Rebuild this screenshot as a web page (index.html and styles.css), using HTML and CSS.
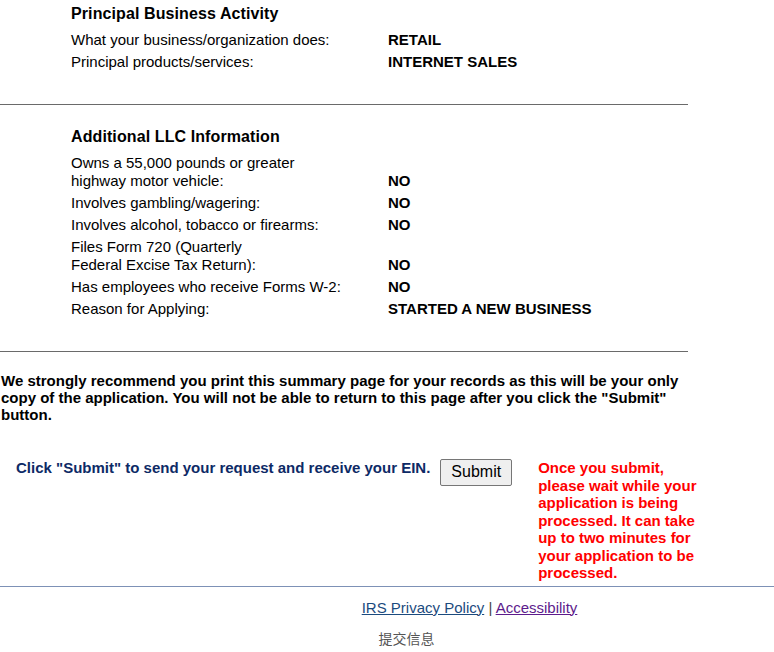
FILE: index.html
```html
<!DOCTYPE html>
<html lang="en">
<head>
    <meta charset="UTF-8">
    <meta name="viewport" content="width=device-width, initial-scale=1.0">
    <title>EIN Application Summary</title>
    <link rel="stylesheet" href="styles.css">
</head>
<body>
    <div class="summary">
        <div class="section">
            <h3>Principal Business Activity</h3>
            <table class="info">
                <tr>
                    <td class="label">What your business/organization does:</td>
                    <td class="value">RETAIL</td>
                </tr>
                <tr>
                    <td class="label">Principal products/services:</td>
                    <td class="value">INTERNET SALES</td>
                </tr>
            </table>
        </div>
        <hr>
        <div class="section">
            <h3>Additional LLC Information</h3>
            <table class="info">
                <tr>
                    <td class="label">Owns a 55,000 pounds or greater<br>highway motor vehicle:</td>
                    <td class="value">NO</td>
                </tr>
                <tr>
                    <td class="label">Involves gambling/wagering:</td>
                    <td class="value">NO</td>
                </tr>
                <tr>
                    <td class="label">Involves alcohol, tobacco or firearms:</td>
                    <td class="value">NO</td>
                </tr>
                <tr>
                    <td class="label">Files Form 720 (Quarterly<br>Federal Excise Tax Return):</td>
                    <td class="value">NO</td>
                </tr>
                <tr>
                    <td class="label">Has employees who receive Forms W-2:</td>
                    <td class="value">NO</td>
                </tr>
                <tr>
                    <td class="label">Reason for Applying:</td>
                    <td class="value">STARTED A NEW BUSINESS</td>
                </tr>
            </table>
        </div>
        <hr>
        <p class="notice">We strongly recommend you print this summary page for your records as this will be your only copy of the application. You will not be able to return to this page after you click the "Submit" button.</p>

        <div class="submit-row">
            <div class="submit-text">Click "Submit" to send your request and receive your EIN.</div>
            <button type="button" class="submit-btn">Submit</button>
            <div class="wait-note">Once you submit, please wait while your application is being processed. It can take up to two minutes for your application to be processed.</div>
        </div>
    </div>

    <div class="footer">
        <div class="footer-links">
            <a href="#" class="privacy">IRS Privacy Policy</a> | <a href="#" class="access">Accessibility</a>
        </div>
        <div class="footer-note">提交信息</div>
    </div>
</body>
</html>
```

FILE: styles.css
```css
html, body {
    margin: 0;
    padding: 0;
}
body {
    font-family: "Liberation Sans", Arial, "Noto Sans CJK SC", sans-serif;
    font-size: 15px;
    color: #000;
    background: #fff;
}
.summary {
    width: 688px;
}
.section {
    padding: 5px 0 0 71px;
}
h3 {
    margin: 0 0 6px 0;
    font-size: 16px;
    line-height: 18px;
    font-weight: bold;
    letter-spacing: 0.1px;
}
.info {
    border-collapse: collapse;
    margin-bottom: 31px;
}
.info td {
    padding: 2px 0;
    line-height: 18px;
    vertical-align: bottom;
}
.info .label {
    width: 317px;
}
.info .value {
    font-weight: bold;
}
hr {
    margin: 0;
    border: 0;
    border-top: 1px solid #6a6a6a;
    height: 0;
}
.section + hr + .section {
    padding-top: 23px;
}
.notice {
    margin: 20px 0 0 1px;
    font-weight: bold;
    line-height: 17px;
}
.submit-row {
    display: flex;
    align-items: flex-start;
    margin-top: 36px;
    padding-left: 16px;
}
.submit-text {
    flex-shrink: 0;
    white-space: nowrap;
    color: #0d2a66;
    font-weight: bold;
    line-height: 17px;
}
.submit-btn {
    flex-shrink: 0;
    margin-left: 10px;
    font-family: "Liberation Sans", Arial, sans-serif;
    font-size: 16px;
    line-height: 18px;
    padding: 3px 10px 4px;
    border: 1px solid #767676;
    border-radius: 2px;
    background: #efefef;
    color: #000;
}
.wait-note {
    flex-shrink: 0;
    margin-left: 26px;
    width: 170px;
    color: #ff0000;
    font-weight: bold;
    line-height: 17.5px;
}
.footer {
    margin-top: 4px;
    border-top: 1px solid #7d91b6;
}
.footer-links {
    padding: 12px 0 0 165px;
    text-align: center;
    color: #444;
    line-height: 17px;
}
.footer-links a {
    text-decoration: underline;
}
.privacy {
    color: #1c4b7e;
}
.access {
    color: #5d1b8c;
}
.footer-note {
    margin-top: 15px;
    padding-left: 39px;
    text-align: center;
    color: #555;
    font-size: 14px;
    line-height: 17px;
}
```
